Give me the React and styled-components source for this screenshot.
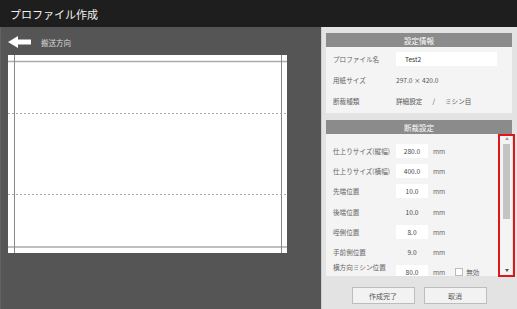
import React from 'react'
import styled, { createGlobalStyle } from 'styled-components'

const GlobalStyle = createGlobalStyle`
html, body { margin:0; padding:0; background:#555; }
body { font-family:"Noto Sans CJK JP", "Noto Sans", sans-serif; }
`
const Screen = styled.div`
width:517px;
height:309px;
display:flex;
flex-direction:column;
overflow:hidden;
`
const TitleBar = styled.div`
height:27px;
flex:none;
background:#1e1e1e;
color:#f2f2f2;
font-size:11px;
display:flex;
align-items:center;
padding-left:10px;
`
const Main = styled.div`
flex:1;
display:flex;
min-height:0;
`
const Stage = styled.div`
flex:1;
background:#555;
border-left:1px solid #626262;
padding:9px 0 0 7px;
display:flex;
flex-direction:column;
`
const DirectionRow = styled.div`
display:flex;
align-items:center;
gap:10px;
height:12px;
margin-bottom:7px;
color:#d8d8d8;
font-size:7.5px;
`
const SidePanel = styled.div`
width:196px;
box-sizing:border-box;
flex:none;
background:#e3e3e3;
border-left:1px solid #cdcdcd;
padding:6px 5px 0 4px;
display:flex;
flex-direction:column;
`
const Section = styled.div`
display:flex;
flex-direction:column;
margin-top:${p => p.$top || 0}px;
`
const SectionHeader = styled.div`
height:14px;
background:#8b8b8b;
color:#fff;
font-size:7.5px;
display:flex;
align-items:center;
justify-content:center;
`
const InfoBody = styled.div`
background:#f4f4f4;
padding:5px 7px;
display:flex;
flex-direction:column;
gap:7px;
`
const Row = styled.div`
display:flex;
align-items:center;
height:14px;
`
const Label = styled.div`
width:63px;
flex:none;
font-size:6.6px;
color:#666;
white-space:nowrap;
align-self:${p => p.$top ? 'flex-start' : 'center'};
margin-top:${p => p.$top ? '-3px' : '0'};
`
const Value = styled.div`
font-size:6.6px;
color:#555;
white-space:nowrap;
display:flex;
`
const Slash = styled.span`
margin:0 10px 0 10px;
`
const NameBox = styled.div`
width:101px;
height:14px;
background:#fff;
font-size:6.6px;
color:#333;
display:flex;
align-items:center;
padding-left:9px;
box-sizing:border-box;
`
const ScrollBody = styled.div`
height:142px;
background:#f4f4f4;
display:flex;
`
const ScrollContent = styled.div`
flex:1;
overflow:hidden;
padding:10px 0 0 7px;
display:flex;
flex-direction:column;
gap:6.2px;
`
const NumBox = styled.div`
width:32px;
height:14px;
flex:none;
background:${p => p.$boxed ? '#fff' : 'transparent'};
font-size:6.6px;
color:#444;
display:flex;
align-items:center;
justify-content:center;
`
const Unit = styled.div`
margin-left:5px;
font-size:6.6px;
color:#666;
`
const Check = styled.div`
width:6px;
height:6px;
margin-left:10px;
border:1px solid #bbb;
background:#fff;
`
const CheckText = styled.div`
margin-left:3px;
font-size:6.6px;
color:#666;
`
const ScrollTrack = styled.div`
position:relative;
width:9px;
margin-right:1px;
display:flex;
flex-direction:column;
align-items:center;
padding:3px 0 4px;
`
const Thumb = styled.div`
width:7px;
height:75px;
margin-top:4px;
background:#c4c4c4;
`
const Arrow = styled.div`
width:0;
height:0;
border-left:2.5px solid transparent;
border-right:2.5px solid transparent;
${p => p.$down ? 'border-top:3px solid #555;' : 'border-bottom:3px solid #a0a0a0;'}
margin-top:${p => p.$down ? 'auto' : '0'};
`
const Marker = styled.div`
position:absolute;
top:0;
bottom:-1px;
left:-4px;
right:-4px;
border:2px solid #e0161b;
box-sizing:border-box;
`
const Footer = styled.div`
flex:1;
display:flex;
justify-content:center;
align-items:flex-start;
padding-top:11px;
gap:9px;
`
const Button = styled.div`
width:63px;
height:17px;
box-sizing:border-box;
background:#f2f2f2;
border:1px solid #bdbdbd;
font-size:7px;
color:#555;
display:flex;
align-items:center;
justify-content:center;
`

const rows = [
    { label: '仕上りサイズ(縦幅)', value: '280.0', boxed: true },
    { label: '仕上りサイズ(横幅)', value: '400.0', boxed: true },
    { label: '先端位置', value: '10.0', boxed: true },
    { label: '後端位置', value: '10.0' },
    { label: '咥側位置', value: '8.0', boxed: true },
    { label: '手前側位置', value: '9.0' },
    { label: '横方向ミシン位置', value: '80.0', boxed: true, check: true },
]

const Paper = () => (
    <svg width="279" height="198" viewBox="0 0 279 198">
        <rect x="0" y="0" width="279" height="198" fill="#fff" />
        <line x1="0" y1="6.5" x2="279" y2="6.5" stroke="#aaa" strokeWidth="1.5" />
        <line x1="0" y1="192" x2="279" y2="192" stroke="#aaa" strokeWidth="1.5" />
        <line x1="6.5" y1="0" x2="6.5" y2="198" stroke="#888" strokeWidth="1" />
        <line x1="273.5" y1="0" x2="273.5" y2="198" stroke="#888" strokeWidth="1" />
        <line x1="0" y1="58.5" x2="278" y2="58.5" stroke="#aaa" strokeWidth="1" strokeDasharray="2 2" />
        <line x1="0" y1="139.5" x2="278" y2="139.5" stroke="#aaa" strokeWidth="1" strokeDasharray="2 2" />
    </svg>
)

const App = () => {
    return (
        <>
            <GlobalStyle />
            <Screen>
                <TitleBar>プロファイル作成</TitleBar>
                <Main>
                    <Stage>
                        <DirectionRow>
                            <svg width="23" height="12" viewBox="0 0 23 12">
                                <polygon points="0,6 10,0 10,3.5 23,3.5 23,8.5 10,8.5 10,12" fill="#fff" />
                            </svg>
                            <span>搬送方向</span>
                        </DirectionRow>
                        <Paper />
                    </Stage>
                    <SidePanel>
                        <Section>
                            <SectionHeader>設定情報</SectionHeader>
                            <InfoBody>
                                <Row>
                                    <Label>プロファイル名</Label>
                                    <NameBox>Test2</NameBox>
                                </Row>
                                <Row>
                                    <Label>用紙サイズ</Label>
                                    <Value>297.0 × 420.0</Value>
                                </Row>
                                <Row>
                                    <Label>断裁種類</Label>
                                    <Value>詳細設定<Slash>/</Slash>ミシン目</Value>
                                </Row>
                            </InfoBody>
                        </Section>
                        <Section $top={7}>
                            <SectionHeader>断裁設定</SectionHeader>
                            <ScrollBody>
                                <ScrollContent>
                                    {rows.map((item, idx) => (
                                        <Row key={idx}>
                                            <Label $top={item.check}>{item.label}</Label>
                                            <NumBox $boxed={item.boxed}>{item.value}</NumBox>
                                            <Unit>mm</Unit>
                                            {item.check && <>
                                                <Check />
                                                <CheckText>無効</CheckText>
                                            </>}
                                        </Row>
                                    ))}
                                </ScrollContent>
                                <ScrollTrack>
                                    <Arrow />
                                    <Thumb />
                                    <Arrow $down />
                                    <Marker />
                                </ScrollTrack>
                            </ScrollBody>
                        </Section>
                        <Footer>
                            <Button>作成完了</Button>
                            <Button>取消</Button>
                        </Footer>
                    </SidePanel>
                </Main>
            </Screen>
        </>
    )
}
export default App;
